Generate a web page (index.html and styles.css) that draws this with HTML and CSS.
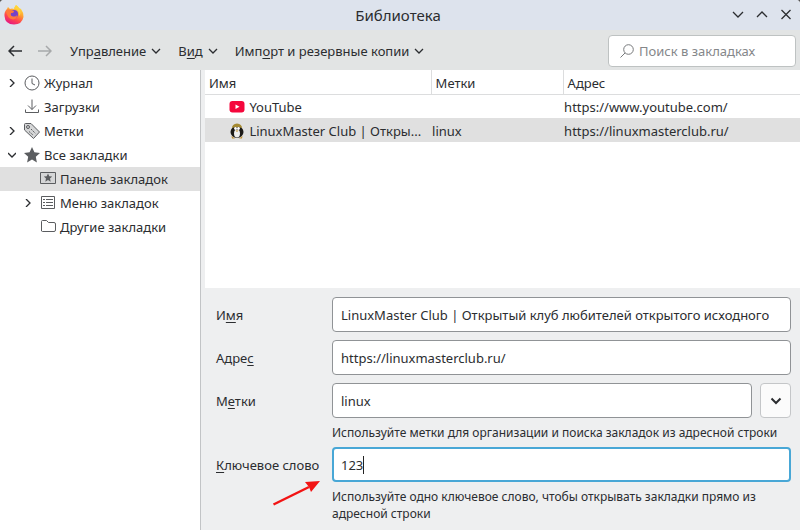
FILE: index.html
```html
<!DOCTYPE html>
<html lang="ru">
  <head>
    <meta charset="UTF-8" />
    <meta name="viewport" content="width=device-width, initial-scale=1.0" />
    <title>Библиотека</title>
    <link rel="stylesheet" href="styles.css">
  </head>

  <body>
    <div class="window">
      <header class="titlebar">
        <svg class="logo" width="20" height="20" viewBox="0 0 20 20">
          <defs>
            <linearGradient id="fire" x1="0.8" y1="0" x2="0.3" y2="1">
              <stop offset="0" stop-color="#fff04a" />
              <stop offset="0.4" stop-color="#ffa130" />
              <stop offset="0.7" stop-color="#ff4550" />
              <stop offset="1" stop-color="#e31587" />
            </linearGradient>
          </defs>
          <path d="M3 4 4 2 6 4Q8 3 10 4L12 0Q14 1 15 3L17 4Q20 8 19.500 12Q18 19.500 10 19.500Q1 19.500 0.500 11Q0 7 3 4Z" fill="url(#fire)" />
          <circle cx="10" cy="9" r="4" fill="#7542c8" />
          <path d="M2 5Q5 4 7 5L10 6Q10 8 7 8Q6 11 9 11.500Q12 12 13 10Q13 14 9 14.500Q3 14 2 5Z" fill="#ff7a3c" />
          <path d="M10 3Q16 5 15 11Q18 8 15 3L12 0Z" fill="#ffd43a" />
        </svg>
        <h1>Библиотека</h1>
        <div class="window-buttons">
          <button aria-label="Свернуть"><svg width="12" height="12" viewBox="0 0 12 12"><path d="M1 3 6 8 11 3" /></svg></button>
          <button aria-label="Развернуть"><svg width="12" height="12" viewBox="0 0 12 12"><path d="M1 8 6 3 11 8" /></svg></button>
          <button aria-label="Закрыть"><svg width="12" height="12" viewBox="0 0 12 12"><path d="M1.500 1 10.500 10M10.500 1 1.500 10" /></svg></button>
        </div>
      </header>

      <nav class="toolbar">
        <button class="nav-button" aria-label="Назад"><svg width="14" height="12" viewBox="0 0 14 12"><path d="M14 6H1M6 1 1 6 6 11" /></svg></button>
        <button class="nav-button" aria-label="Вперёд" disabled><svg width="14" height="12" viewBox="0 0 14 12"><path d="M0 6H13M8 1 13 6 8 11" /></svg></button>
        <button class="menu">Упр<u>а</u>вление<svg width="10" height="8" viewBox="0 0 10 8"><path d="M1 2 5 6 9 2" /></svg></button>
        <button class="menu">В<u>и</u>д<svg width="10" height="8" viewBox="0 0 10 8"><path d="M1 2 5 6 9 2" /></svg></button>
        <button class="menu">Имп<u>о</u>рт и резервные копии<svg width="10" height="8" viewBox="0 0 10 8"><path d="M1 2 5 6 9 2" /></svg></button>
        <label class="search">
          <svg width="14" height="14" viewBox="0 0 14 14"><circle cx="8.500" cy="5.500" r="4.800" /><path d="M5 9 0.500 13.500" /></svg>
          <input type="search" placeholder="Поиск в закладках" aria-label="Поиск в закладках" />
        </label>
      </nav>

      <div class="content">
        <aside class="sidebar">
          <ul class="tree">
            <li>
              <svg class="arrow" width="8" height="8" viewBox="0 0 8 8"><path d="M2 0 6 4 2 8" /></svg>
              <svg class="icon" width="16" height="16" viewBox="0 0 16 16"><circle cx="8" cy="8" r="7" /><path d="M8 3.500V8.500L11 10" /></svg>
              Журнал
            </li>
            <li>
              <span class="arrow"></span>
              <svg class="icon" width="16" height="16" viewBox="0 0 16 16"><path d="M8 0.500V10.500M4 6.500 8 10.500 12 6.500M1.500 10.500V13.500H14.500V10.500" /></svg>
              Загрузки
            </li>
            <li>
              <svg class="arrow" width="8" height="8" viewBox="0 0 8 8"><path d="M2 0 6 4 2 8" /></svg>
              <svg class="icon" width="16" height="16" viewBox="0 0 16 16"><path class="tint" d="M0.500 1.500Q0.500 0.500 1.500 0.500H7L15.500 9 9.500 15.500 0.500 7Z" /><circle cx="4" cy="4" r="1.500" /><path d="M7 6 11.500 10.500M5 8.500 9.500 12.500" stroke-dasharray="2 1" /></svg>
              Метки
            </li>
            <li>
              <svg class="arrow" width="8" height="8" viewBox="0 0 8 8"><path d="M0 2 4 6 8 2" /></svg>
              <svg class="icon" width="16" height="16" viewBox="0 0 16 16"><path class="solid" d="M8 0 10.400 5.200 16 6 11.800 9.800 12.900 15.400 8 12.600 3.100 15.400 4.200 9.800 0 6 5.600 5.200Z" /></svg>
              Все закладки
            </li>
            <li class="child selected">
              <span class="arrow"></span>
              <svg class="icon" width="16" height="16" viewBox="0 0 16 16"><path class="tint" d="M0.500 1.500H15.500V12.500H0.500Z" /><path class="solid" d="M8 2.500 9.300 5.300 12.200 5.600 10 7.600 10.700 10.700 8 9.100 5.300 10.700 6 7.600 3.800 5.600 6.700 5.300Z" /></svg>
              Панель закладок
            </li>
            <li class="child">
              <svg class="arrow" width="8" height="8" viewBox="0 0 8 8"><path d="M2 0 6 4 2 8" /></svg>
              <svg class="icon" width="16" height="16" viewBox="0 0 16 16"><path d="M1.500 1.500H14.500V13.500H1.500ZM3 4.500H5M6 4.500H13M3 7.500H5M6 7.500H13M3 10.500H5M6 10.500H13" /></svg>
              Меню закладок
            </li>
            <li class="child">
              <span class="arrow"></span>
              <svg class="icon" width="16" height="16" viewBox="0 0 16 16"><path d="M1.500 12V2.500Q1.500 1.500 2.500 1.500H6.500L8.500 3.500H14Q15.500 3.500 15.500 5V11Q15.500 12.500 14 12.500H2.500Q1.500 12.500 1.500 11.500Z" /></svg>
              Другие закладки
            </li>
          </ul>
        </aside>

        <main class="main">
          <div class="list">
            <table>
              <thead>
                <tr>
                  <th class="col-name">Имя</th>
                  <th class="col-tags">Метки</th>
                  <th>Адрес</th>
                </tr>
              </thead>
              <tbody>
                <tr>
                  <td class="name">
                    <svg width="16" height="16" viewBox="0 0 16 16"><rect x="0.500" y="2" width="15" height="11.500" rx="3" fill="#f5073c" /><path d="M6.500 5.500V10L10.500 7.800Z" fill="#fff" /></svg>
                    YouTube
                  </td>
                  <td></td>
                  <td>https://www.youtube.com/</td>
                </tr>
                <tr class="selected">
                  <td class="name">
                    <svg width="16" height="16" viewBox="0 0 16 16"><ellipse cx="8" cy="9" rx="6.500" ry="6" fill="#1c1a17" /><path d="M3 5Q3 1 8 0.500 13 1 13 5 8 3 3 5Z" fill="#a58a32" /><ellipse cx="8" cy="10.500" rx="3" ry="4" fill="#eee" /><circle cx="6.500" cy="5.500" r="1.400" fill="#fff" /><circle cx="9.500" cy="5.500" r="1.400" fill="#fff" /><path d="M6.500 7.500H9.500L8 9ZM2.500 13 6 15.500H3ZM13.500 13 10 15.500H13Z" fill="#c2902e" /></svg>
                    LinuxMaster Club | Откры...
                  </td>
                  <td>linux</td>
                  <td>https://linuxmasterclub.ru/</td>
                </tr>
              </tbody>
            </table>
          </div>

          <form class="details">
            <label for="name">И<u>м</u>я</label>
            <input id="name" type="text" value="LinuxMaster Club | Открытый клуб любителей открытого исходного" />

            <label for="url">Адре<u>с</u></label>
            <input id="url" type="text" value="https://linuxmasterclub.ru/" />

            <label for="tags">М<u>е</u>тки</label>
            <div class="tags-row">
              <input id="tags" type="text" value="linux" />
              <button type="button" aria-label="Показать все метки"><svg width="12" height="12" viewBox="0 0 12 12"><path d="M1.500 3.500 6 8 10.500 3.500" /></svg></button>
            </div>
            <p>Используйте метки для организации и поиска закладок из адресной строки</p>

            <label for="keyword"><u>К</u>лючевое слово</label>
            <input id="keyword" class="active" type="text" value="123" />
            <p>Используйте одно ключевое слово, чтобы открывать закладки прямо из адресной строки</p>
          </form>
        </main>
      </div>

      <!-- указатель на поле ключевого слова -->
      <svg class="pointer" width="50" height="28" viewBox="0 0 50 28"><path d="M1.500 25.500 37 8" stroke="#f21414" stroke-width="2.500" /><path d="M48 2 39 13 37 8 33 3Z" fill="#f21414" /></svg>
    </div>
  </body>
</html>
```
FILE: styles.css
```css
* {
  box-sizing: border-box;
}
body {
  margin: 0;
  background-color: #555;
  color: #2b2d30;
  font-family: "Noto Sans", sans-serif;
  font-size: 13px;
  line-height: 18px;
}
button,
input {
  font: inherit;
  color: inherit;
}
button {
  border: none;
  background: none;
  padding: 0;
}
svg {
  flex: none;
  fill: none;
  stroke: currentColor;
}
u {
  text-underline-offset: 2px;
}
.window {
  position: relative;
  display: flex;
  flex-direction: column;
  min-height: 100vh;
  border-radius: 4px 4px 0 0;
  background-color: #eeeff0;
  overflow: hidden;
}

.titlebar {
  display: grid;
  grid-template-columns: 1fr auto 1fr;
  align-items: center;
  height: 30px;
  padding: 0 8px 0 4px;
  background-color: #dde3ed;
}
.titlebar h1 {
  margin: 0;
  font-size: 15px;
  font-weight: 400;
  line-height: 20px;
}
.logo {
  stroke: none;
}
.window-buttons {
  display: flex;
  justify-content: flex-end;
  gap: 12px;
}
.window-buttons svg {
  display: block;
  stroke-width: 1.3;
}

.toolbar {
  display: flex;
  align-items: center;
  height: 40px;
  padding: 1px 4px 0 8px;
  background-color: #e2e4e4;
}
.nav-button {
  display: flex;
  width: 30px;
}
.nav-button svg {
  stroke-width: 1.5;
}
.nav-button:disabled {
  color: #a7a9aa;
}
.menu {
  display: flex;
  align-items: center;
  margin-right: 17px;
  white-space: pre;
}
.menu svg {
  margin-left: 5px;
  stroke-width: 1.3;
}
.nav-button + .menu {
  margin-left: 2px;
}
.search {
  display: flex;
  align-items: center;
  gap: 5px;
  width: 188px;
  height: 32px;
  margin-left: auto;
  padding: 0 11px;
  border: 1px solid #bec2c2;
  border-radius: 4px;
  background-color: #fff;
  color: #77797b;
}
.search input {
  width: 100%;
  min-width: 0;
  padding: 0;
  border: none;
  outline: none;
  background: none;
}
.search input::placeholder {
  color: #85878a;
}

.content {
  display: flex;
  flex: 1;
}
.sidebar {
  width: 25%;
  background-color: #fff;
}
.tree {
  margin: 0;
  padding: 1px 0 0;
  list-style: none;
}
.tree li {
  display: flex;
  align-items: center;
  gap: 4px;
  height: 24px;
  padding-left: 8px;
  white-space: nowrap;
}
.tree .child {
  padding-left: 24px;
}
.arrow {
  width: 8px;
  margin-right: 4px;
  stroke-width: 1.3;
}
.icon {
  color: #5b5d60;
}
.tint {
  fill: #d5d6d7;
}
.solid {
  fill: #5b5d60;
  stroke: none;
}
.selected {
  background-color: #e0e0e0;
}

.main {
  display: flex;
  flex: 1;
  flex-direction: column;
  min-width: 0;
  padding-left: 4px;
  border-left: 1px solid #c2c4c6;
}
.list {
  flex: 1;
  background-color: #fff;
}
table {
  width: 100%;
  border-collapse: collapse;
  table-layout: fixed;
}
th {
  height: 24px;
  padding: 2px 4px 0;
  border-right: 1px solid #dcddde;
  border-bottom: 1px solid #dcddde;
  font-weight: 400;
  text-align: left;
}
th:last-child {
  border-right: none;
}
.col-name {
  width: 38%;
}
.col-tags {
  width: 132px;
}
td {
  height: 24px;
  padding: 2px 1px 0;
  white-space: nowrap;
}
.name {
  padding-left: 24px;
}
.name svg {
  margin-right: 1px;
  stroke: none;
  vertical-align: -3px;
}

.details {
  display: grid;
  grid-template-columns: 116px 1fr;
  row-gap: 8px;
  padding: 9px 9px 10px 11px;
}
.details label {
  align-self: center;
}
.details input {
  width: 100%;
  min-width: 0;
  height: 35px;
  padding: 1px 8px 0;
  border: 1px solid #909396;
  border-radius: 4px;
  background-color: #fff;
  outline: none;
}
.details .active {
  padding: 0 7px;
  border: 2px solid #48a7d6;
  background: #fff linear-gradient(#222, #222) no-repeat 29px center / 1px 18px;
}
.details p {
  grid-column: 2;
  margin: -2px 0;
  font-size: 12px;
  line-height: 17px;
}
.tags-row {
  display: flex;
  gap: 8px;
}
.tags-row button {
  display: flex;
  flex: none;
  align-items: center;
  justify-content: center;
  width: 31px;
  border: 1px solid #c4c6c8;
  border-radius: 4px;
  background-color: #fbfbfb;
}
.tags-row svg {
  stroke-width: 2;
}

.pointer {
  position: absolute;
  left: 272px;
  top: 479px;
  stroke: none;
}
```
